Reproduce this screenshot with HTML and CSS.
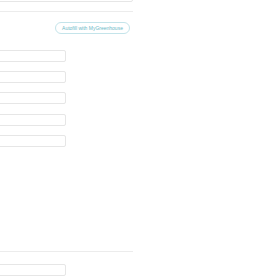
FILE: index.html
```html
<!DOCTYPE html>
<html>
<head>
<meta charset="utf-8">
<link rel="stylesheet" href="styles.css">
</head>
<body>
<div class="page">
  <div class="topbox"></div>
  <div class="rule rule-top"></div>
  <div class="head">
    <button class="autofill">Autofill with MyGreenhouse</button>
  </div>
  <div class="fields">
    <div class="field"></div>
    <div class="field"></div>
    <div class="field"></div>
    <div class="field"></div>
    <div class="field"></div>
  </div>
  <div class="rule rule-bottom"></div>
  <div class="field field-last"></div>
  <div class="note">........ ... .......</div>
</div>
</body>
</html>
```
FILE: styles.css
```css
html, body {
  margin: 0;
  padding: 0;
  background: #ffffff;
  overflow: hidden;
}
.page {
  width: 233px;
  margin-left: -100px;
  font-family: "Liberation Sans", Arial, sans-serif;
}
.topbox {
  height: 40px;
  margin-top: -38px;
  border: 1px solid #e6e6e6;
  border-radius: 2px;
  box-sizing: border-box;
}
.rule {
  height: 1px;
  background: #ececec;
}
.rule-top {
  margin-top: 9px;
}
.head {
  display: flex;
  justify-content: flex-end;
  padding-right: 3px;
  margin-top: 10px;
}
.autofill {
  height: 12px;
  padding: 0;
  border: 1px solid #c4e4ea;
  border-radius: 6px;
  background: #fff;
  color: #6bb8c6;
  font-family: "Liberation Sans", Arial, sans-serif;
  font-size: 5px;
  line-height: 10px;
  width: 75px;
}
.fields {
  display: flex;
  flex-direction: column;
  gap: 9.2px;
  margin-top: 16px;
}
.field {
  width: 166px;
  height: 12px;
  border: 1px solid #e6e6e6;
  border-radius: 2px;
  box-sizing: border-box;
}
.rule-bottom {
  margin-top: 104px;
}
.field-last {
  margin-top: 12px;
}
.note {
  font-size: 4px;
  line-height: 4px;
  color: #bbb;
  padding-left: 100px;
}
```
